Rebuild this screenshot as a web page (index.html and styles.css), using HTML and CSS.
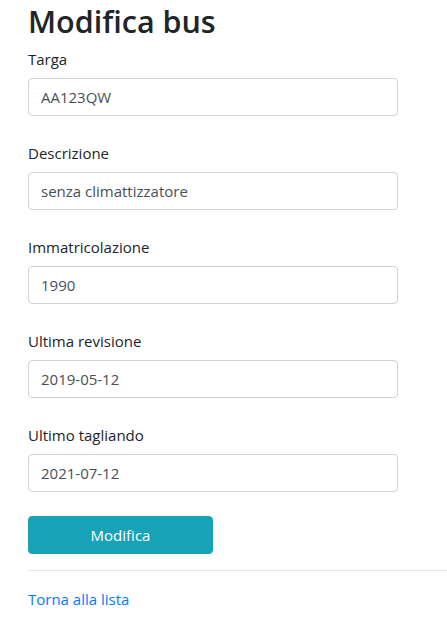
FILE: index.html
```html
<!DOCTYPE html>
<html lang="it">
<head>
<meta charset="utf-8">
<title>Modifica bus</title>
<link rel="stylesheet" href="styles.css">
</head>
<body>
<main class="page">
  <h2 class="title">Modifica bus</h2>
  <form class="form">
    <div class="form-group">
      <label class="label" for="targa">Targa</label>
      <input class="input" id="targa" type="text" value="AA123QW">
    </div>
    <div class="form-group">
      <label class="label" for="descrizione">Descrizione</label>
      <input class="input" id="descrizione" type="text" value="senza climattizzatore">
    </div>
    <div class="form-group">
      <label class="label" for="immatricolazione">Immatricolazione</label>
      <input class="input" id="immatricolazione" type="text" value="1990">
    </div>
    <div class="form-group">
      <label class="label" for="revisione">Ultima revisione</label>
      <input class="input" id="revisione" type="text" value="2019-05-12">
    </div>
    <div class="form-group">
      <label class="label" for="tagliando">Ultimo tagliando</label>
      <input class="input" id="tagliando" type="text" value="2021-07-12">
    </div>
    <div class="actions">
      <button class="btn" type="button">Modifica</button>
    </div>
  </form>
  <hr class="divider">
  <div class="back">
    <a class="link" href="#">Torna alla lista</a>
  </div>
</main>
</body>
</html>
```

FILE: styles.css
```css
html, body {
  margin: 0;
  padding: 0;
  background: #fff;
}

body {
  font-family: "Open Sans", "Noto Sans", sans-serif;
  font-size: 15px;
  line-height: 24px;
  color: #212529;
}

.page {
  padding-left: 28px;
  overflow: hidden;
}

.title {
  margin: 0 0 4px;
  font-size: 30.5px;
  font-weight: 600;
  line-height: 42px;
  color: #212529;
}

.form {
  width: 370px;
  display: flex;
  flex-direction: column;
  gap: 24px;
}

.form-group {
  display: flex;
  flex-direction: column;
  gap: 8px;
}

.label {
  display: block;
  height: 24px;
  line-height: 26px;
}

.input {
  box-sizing: border-box;
  height: 38px;
  width: 100%;
  margin: 0;
  padding: 6px 12px;
  font-family: inherit;
  font-size: 15px;
  line-height: 24px;
  color: #495057;
  background: #fff;
  border: 1px solid #ced4da;
  border-radius: 4px;
  outline: none;
}

.actions {
  display: flex;
}

.btn {
  box-sizing: border-box;
  width: 185px;
  height: 38px;
  padding: 6px 12px;
  font-family: inherit;
  font-size: 15px;
  line-height: 24px;
  color: #fff;
  background: #17a2b8;
  border: 1px solid #17a2b8;
  border-radius: 4px;
  text-align: center;
}

.divider {
  margin: 16px 0;
  border: 0;
  border-top: 1px solid rgba(0, 0, 0, 0.1);
  height: 0;
}

.back {
  height: 24px;
}

.link {
  color: #007bff;
  text-decoration: none;
}
```
